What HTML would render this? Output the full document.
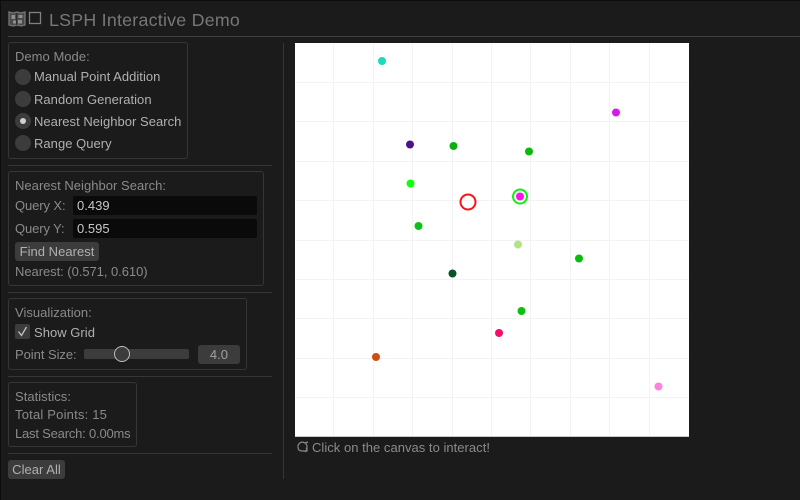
<!DOCTYPE html>
<html><head><meta charset="utf-8"><style>
html,body{margin:0;padding:0;background:#1b1b1b;width:800px;height:500px;overflow:hidden}
body{position:relative;font-family:"Liberation Sans",sans-serif;font-size:13px;letter-spacing:.03px;color:#8a8a8a}
.a{position:absolute;box-sizing:border-box}
.t{position:absolute;white-space:nowrap;line-height:16px;height:16px}
.box{position:absolute;box-sizing:border-box;border:1px solid #363636;border-radius:3px}
.sep{position:absolute;height:1px;background:#363636}
.radio{position:absolute;width:16px;height:16px;border-radius:50%;background:#3c3c3c;left:15px}
.lt{color:#b0b0b0}
.inp{position:absolute;background:#0a0a0a;height:19px;border-radius:2px;color:#c8c8c8;line-height:19px;padding-left:4px;box-sizing:border-box}
.btn{position:absolute;background:#3c3c3c;border-radius:3px;color:#b0b0b0;text-align:center;height:19px;line-height:19px}
</style></head><body>
<div class="a" style="left:0;top:0;width:800px;height:1px;background:#0c0c0c"></div>
<div class="a" style="left:0;top:0;width:1px;height:500px;background:#0c0c0c"></div>

<svg class="a" style="left:8px;top:10px" width="36" height="18" viewBox="0 0 36 18">
<path d="M1 2 L5 3 L9 2 L13 3 L17 2 L17 15 L13 16 L9 15 L5 16 L1 15 Z" fill="#4a4a4a" stroke="#757575" stroke-width="1.300"/>
<path d="M3.500 5 h3.500 v4 h-3.500 Z M10.500 5 h4 v3 h-4 Z M5 10.500 h3 v3 h-3 Z M10 10 h4 v3.500 h-4 Z" fill="#909090"/>
<path d="M8.500 3 V15" stroke="#2c2c2c" stroke-width="1"/>
<rect x="21.500" y="2.500" width="11" height="11" fill="none" stroke="#808080" stroke-width="1.300"/>
</svg>
<div class="t" style="left:49px;top:10px;font-size:17.800px;line-height:20px;height:20px;color:#777;letter-spacing:.25px">LSPH Interactive Demo</div>
<div class="sep" style="left:8px;top:36px;width:792px;background:#404040"></div>

<div class="box" style="left:8px;top:42px;width:180px;height:117px"></div>
<div class="t" style="left:15px;top:49px">Demo Mode:</div>
<div class="radio" style="top:69px"></div><div class="t lt" style="left:34px;top:69px">Manual Point Addition</div>
<div class="radio" style="top:91px"></div><div class="t lt" style="left:34px;top:92px">Random Generation</div>
<div class="radio" style="top:113px"></div><div class="a" style="left:20px;top:118px;width:6px;height:6px;border-radius:50%;background:#d0d0d0"></div><div class="t lt" style="left:34px;top:114px">Nearest Neighbor Search</div>
<div class="radio" style="top:135px"></div><div class="t lt" style="left:34px;top:136px">Range Query</div>

<div class="sep" style="left:8px;top:165px;width:264px"></div>

<div class="box" style="left:8px;top:171px;width:256px;height:115px"></div>
<div class="t" style="left:15px;top:178px">Nearest Neighbor Search:</div>
<div class="t" style="left:15px;top:198px;letter-spacing:-.1px">Query X:</div>
<div class="inp" style="left:73px;top:196px;width:184px">0.439</div>
<div class="t" style="left:15px;top:221px;letter-spacing:-.1px">Query Y:</div>
<div class="inp" style="left:73px;top:219px;width:184px">0.595</div>
<div class="btn" style="left:15px;top:242px;width:84px">Find Nearest</div>
<div class="t" style="left:15px;top:264px;letter-spacing:-.05px">Nearest: (0.571, 0.610)</div>

<div class="sep" style="left:8px;top:292px;width:264px"></div>

<div class="box" style="left:8px;top:298px;width:239px;height:72px"></div>
<div class="t" style="left:15px;top:305px">Visualization:</div>
<div class="a" style="left:15px;top:324px;width:15px;height:15px;background:#3c3c3c;border-radius:2px"></div>
<svg class="a" style="left:15px;top:324px" width="15" height="15" viewBox="0 0 15 15"><path d="M3.500 7.500 L6.500 11.500 L11.500 3" fill="none" stroke="#c4c4c4" stroke-width="1.300"/></svg>
<div class="t lt" style="left:34px;top:325px">Show Grid</div>
<div class="t" style="left:15px;top:347px;letter-spacing:-.05px">Point Size:</div>
<div class="a" style="left:84px;top:349px;width:105px;height:10px;background:#3c3c3c;border-radius:2px"></div>
<div class="a" style="left:114px;top:346px;width:16px;height:16px;border-radius:50%;background:#3c3c3c;border:1.500px solid #bcbcbc"></div>
<div class="btn" style="left:198px;top:345px;width:42px;color:#a0a0a0">4.0</div>

<div class="sep" style="left:8px;top:376px;width:264px"></div>

<div class="box" style="left:8px;top:382px;width:129px;height:65px"></div>
<div class="t" style="left:15px;top:389px">Statistics:</div>
<div class="t" style="left:15px;top:407px;letter-spacing:.2px">Total Points: 15</div>
<div class="t" style="left:15px;top:426px;letter-spacing:-.2px">Last Search: 0.00ms</div>

<div class="sep" style="left:8px;top:453px;width:264px"></div>
<div class="btn" style="left:8px;top:460px;width:57px">Clear All</div>

<div class="a" style="left:283px;top:43px;width:1px;height:436px;background:#363636"></div>

<svg class="a" style="left:295px;top:43px" width="394" height="394" viewBox="0 0 394 394">
<rect width="394" height="394" fill="#fff"/>
<g stroke="#f3f3f3" stroke-width="1">
<path d="M38.500 0V394M78.500 0V394M117.500 0V394M157.500 0V394M196.500 0V394M235.500 0V394M275.500 0V394M314.500 0V394M354.500 0V394"/>
<path d="M0 39.500H394M0 78.500H394M0 118.500H394M0 157.500H394M0 197.500H394M0 236.500H394M0 275.500H394M0 315.500H394M0 354.500H394"/>
</g>
<g>
<circle cx="87" cy="18" r="4" fill="#1adcb8"/>
<circle cx="321" cy="69.500" r="4" fill="#d81ae8"/>
<circle cx="115" cy="101.500" r="4" fill="#4c1488"/>
<circle cx="158.500" cy="103" r="4" fill="#0cb00c"/>
<circle cx="234" cy="108.500" r="4" fill="#0cb80c"/>
<circle cx="115.500" cy="140.500" r="4" fill="#10ff10"/>
<circle cx="123.500" cy="183" r="4" fill="#0cc01c"/>
<circle cx="223" cy="201.500" r="4" fill="#b0e484"/>
<circle cx="284" cy="215.500" r="4" fill="#0cbc0c"/>
<circle cx="157.500" cy="230.500" r="4" fill="#0c5028"/>
<circle cx="226.500" cy="268" r="4" fill="#0cc010"/>
<circle cx="204" cy="290" r="4" fill="#f80c6c"/>
<circle cx="81" cy="314" r="4" fill="#d04c10"/>
<circle cx="363.500" cy="343.500" r="4" fill="#ff80e0"/>
<circle cx="225" cy="153.500" r="4" fill="#ff10e8"/>
<circle cx="225" cy="153.500" r="7" fill="none" stroke="#10f010" stroke-width="2"/>
<circle cx="173" cy="159" r="7.500" fill="none" stroke="#f81414" stroke-width="2"/>
</g>
</svg>
<div class="a" style="left:295px;top:436px;width:394px;height:1px;background:#c8c8c8"></div>

<svg class="a" style="left:296px;top:440px" width="14" height="14" viewBox="0 0 14 14"><path d="M2 7 A4.500 4.500 0 1 1 10 9.500 M2 7 C2 10 4 11 6 11 M6 11 H11 V8 M9 12 L11 10 M9 3 L12 2" fill="none" stroke="#8a8a8a" stroke-width="1.200"/></svg>
<div class="t" style="left:312px;top:440px">Click on the canvas to interact!</div>
</body></html>
